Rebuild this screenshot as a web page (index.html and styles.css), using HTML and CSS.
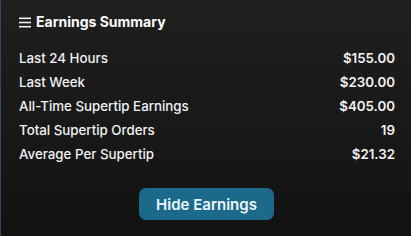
FILE: index.html
```html
<!DOCTYPE html>
<html>
<head>
<title>Earnings Summary</title>
<link rel="stylesheet" href="styles.css">
</head>
<body>

<div class="earnings-card">
    <h2 class="card-title">
        <svg class="menu-icon" width="12" height="11" viewBox="0 0 12 11">
            <rect x="0" y="0.5" width="12" height="1.6" fill="#f2f2f2"/>
            <rect x="0" y="4.7" width="12" height="1.6" fill="#f2f2f2"/>
            <rect x="0" y="8.9" width="12" height="1.6" fill="#f2f2f2"/>
        </svg>Earnings Summary
    </h2>

    <div class="stats">
        <div class="stat-row"><span>Last 24 Hours</span><span class="stat-value">$155.00</span></div>
        <div class="stat-row"><span>Last Week</span><span class="stat-value">$230.00</span></div>
        <div class="stat-row"><span>All-Time Supertip Earnings</span><span class="stat-value">$405.00</span></div>
        <div class="stat-row"><span>Total Supertip Orders</span><span class="stat-value">19</span></div>
        <div class="stat-row"><span>Average Per Supertip</span><span class="stat-value">$21.32</span></div>
    </div>

    <div class="actions">
        <button class="hide-btn">Hide Earnings</button>
    </div>
</div>

</body>
</html>
```

FILE: styles.css
```css
html, body {
    margin: 0;
    padding: 0;
    background-color: #121212;
}
body {
    font-family: Inter, 'Noto Sans', sans-serif;
    color: #f2f2f2;
}
.earnings-card {
    box-sizing: border-box;
    width: 411px;
    height: 236px;
    padding: 12px 16px 0 18px;
    border-left: 1px solid #2b4d5a;
    background: linear-gradient(180deg, #1f1f1f 0%, #191919 50%, #121212 100%);
}
.card-title {
    display: flex;
    align-items: center;
    margin: 0;
    font-size: 14px;
    font-weight: 700;
    line-height: 20px;
    color: #ffffff;
}
.menu-icon {
    margin-right: 5px;
    margin-top: 1px;
}
.stats {
    margin-top: 14px;
}
.stat-row {
    display: flex;
    justify-content: space-between;
    font-size: 13.3px;
    font-weight: 500;
    line-height: 24px;
}
.stat-value {
    font-weight: 600;
}
.actions {
    display: flex;
    justify-content: center;
    margin-top: 22px;
    padding-right: 1px;
}
.hide-btn {
    width: 135px;
    height: 32px;
    border: none;
    border-radius: 7px;
    background-color: #1c6a8b;
    color: #eef7fa;
    font-family: Inter, 'Noto Sans', sans-serif;
    font-size: 15px;
    font-weight: 600;
    cursor: pointer;
}
```
